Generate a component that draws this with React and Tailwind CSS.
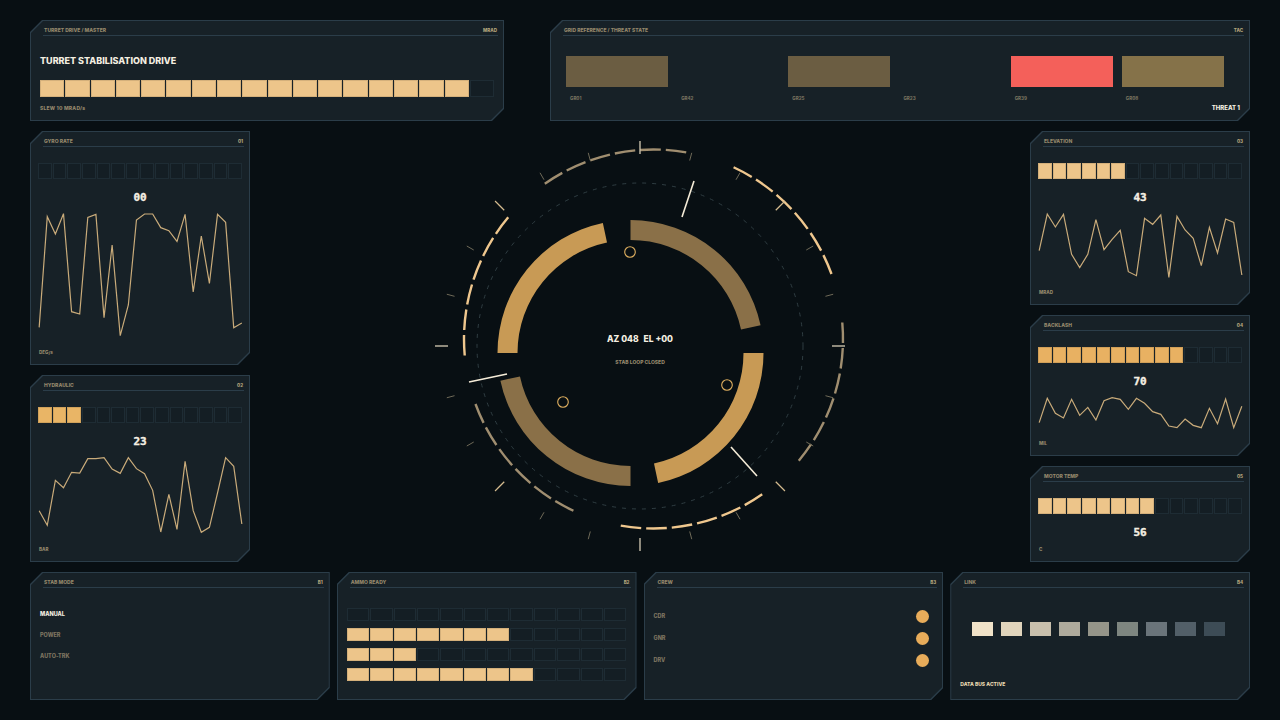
import React from "react";

const polar = (cx, cy, r, deg) => {
  const a = ((deg - 90) * Math.PI) / 180;
  return [cx + r * Math.cos(a), cy + r * Math.sin(a)];
};

const arc = (cx, cy, r, from, to) => {
  const [x1, y1] = polar(cx, cy, r, from);
  const [x2, y2] = polar(cx, cy, r, to);
  return `M${x1} ${y1}A${r} ${r} 0 ${to - from > 180 ? 1 : 0} 1 ${x2} ${y2}`;
};

const wedge = (cx, cy, r1, r2, from, to) => {
  const [x1, y1] = polar(cx, cy, r2, from);
  const [x2, y2] = polar(cx, cy, r2, to);
  const [x3, y3] = polar(cx, cy, r1, to);
  const [x4, y4] = polar(cx, cy, r1, from);
  return `M${x1} ${y1}A${r2} ${r2} 0 0 1 ${x2} ${y2}L${x3} ${y3}A${r1} ${r1} 0 0 0 ${x4} ${y4}Z`;
};

const Panel = ({ label, tag, className = "", children }) => (
  <div className={`bg-[#2b3d49] p-px [clip-path:polygon(12px_0,100%_0,100%_calc(100%-12px),calc(100%-12px)_100%,0_100%,0_12px)] ${className}`}>
    <div className="h-full bg-[#172127] flex flex-col [clip-path:polygon(12px_0,100%_0,100%_calc(100%-12px),calc(100%-12px)_100%,0_100%,0_12px)]">
      <div className="mt-[7px] ml-[12px] mr-[5px] h-[6px] px-px flex items-center justify-between border-b border-[#2b3d49] pb-[1px] box-content shrink-0">
        <span className="text-[5px] font-extrabold text-[#94876b]">{label}</span>
        <span className="text-[4.5px] font-extrabold text-[#b3a47c]">{tag}</span>
      </div>
      {children}
    </div>
  </div>
);

const Cells = ({ total, on, height, color = "bg-[#edc58a]" }) => (
  <div className="flex gap-[1px]">
    {Array.from({ length: total }).map((_, i) => (
      <div
        key={i}
        style={{ height }}
        className={`flex-1 border ${i < on ? `${color} border-black/10` : "bg-[#141e24] border-[#1e2c34]"}`}
      />
    ))}
  </div>
);

const Spark = ({ ys, top, height }) => {
  const pts = ys.map((y, i) => `${56 + i * 24.32},${y}`).join(" ");
  return (
    <svg width="203" height={height} viewBox={`56 ${top} 608 ${height * 3}`} className="block shrink-0 ml-[7.5px] mt-[8px] overflow-visible">
      <polyline points={pts} fill="none" stroke="#c9ab7a" strokeWidth="3.6" strokeLinejoin="miter" />
    </svg>
  );
};

const Gauge = ({ label, tag, on, color, value, unit, spark, top, chart, className }) => (
  <Panel label={label} tag={tag} className={className}>
    <div className="mt-[16px] px-[7px] shrink-0">
      <Cells total={14} on={on} height={16} color={color} />
    </div>
    <div className="mt-[12px] h-[14px] flex items-center justify-center font-['DejaVu_Sans_Mono',monospace] text-[11px] font-bold [-webkit-text-stroke:0.4px_#f5efe2] text-[#f5efe2] shrink-0">
      {value}
    </div>
    {spark && <Spark ys={spark} top={top} height={chart} />}
    <div className="mt-auto mb-[7px] ml-[8px] text-[4.5px] font-extrabold text-[#94876b]">{unit}</div>
  </Panel>
);

const gyro = [607, 275, 327, 266, 560, 567, 277, 268, 578, 360, 632, 540, 285, 267, 267, 308, 317, 349, 268, 501, 333, 475, 268, 292, 608, 594];
const hydraulic = [423, 467, 332, 354, 308, 310, 267, 267, 264, 298, 311, 264, 297, 312, 362, 487, 374, 479, 275, 423, 488, 473, 370, 264, 290, 463];
const elevation = [377, 267, 306, 268, 388, 428, 388, 284, 374, 343, 316, 440, 452, 280, 298, 270, 457, 274, 315, 340, 422, 307, 384, 282, 292, 450];
const backlash = [893, 820, 865, 879, 823, 871, 847, 885, 827, 818, 823, 853, 820, 835, 860, 868, 903, 908, 882, 901, 908, 850, 896, 822, 908, 844];

const grid = [
  { id: "GR01", color: "bg-[#6b5d42]" },
  { id: "GR42" },
  { id: "GR25", color: "bg-[#6b5d42]" },
  { id: "GR23" },
  { id: "GR39", color: "bg-[#f4605a]" },
  { id: "GR08", color: "bg-[#857249]" },
];

const linkColors = ["bg-[#f0e2c8]", "bg-[#e0d4bc]", "bg-[#c8bfac]", "bg-[#aeaa9c]", "bg-[#959589]", "bg-[#7e8680]", "bg-[#6a747a]", "bg-[#525f68]", "bg-[#3d4c56]"];

const tickStyle = (deg) => {
  if (deg % 90 === 0) return { r1: 192, r2: 205, color: "#e8dcc4", w: 1.2 };
  if (deg % 45 === 0) return { r1: 192, r2: 205, color: "#d5bc90", w: 1.2 };
  return { r1: 192, r2: 200, color: "#6f6a58", w: 1 };
};

const Dial = () => {
  const ticks = Array.from({ length: 24 }).map((_, i) => i * 15);
  const arcs = [25, 85, 145, 205, 265, 325];
  return (
    <svg viewBox="250 131 780 430" className="absolute left-0 top-0 w-[780px] h-[430px]">
      <circle cx="640" cy="346" r="163" fill="none" stroke="#2f3d42" strokeWidth="1" strokeDasharray="4 6" />
      {[0, 90, 180, 270].map((a, i) => (
        <path key={a} d={wedge(630.5, 353, 113, 133, a, a + 78)} fill={i % 2 ? "#c89a55" : "#8a7048"} />
      ))}
      {arcs.map((a, i) => (
        <path
          key={a}
          d={arc(653.5, 339, 189.5, a, a + 45)}
          fill="none"
          stroke={i % 2 ? "#a08e70" : "#efc78e"}
          strokeWidth="2.4"
          strokeDasharray="20.6 5"
        />
      ))}
      {ticks.map((deg) => {
        const t = tickStyle(deg);
        const [x1, y1] = polar(640, 346, t.r1, deg);
        const [x2, y2] = polar(640, 346, t.r2, deg);
        return <line key={deg} x1={x1} y1={y1} x2={x2} y2={y2} stroke={t.color} strokeWidth={t.w} />;
      })}
      <line x1="682" y1="217" x2="694" y2="181" stroke="#f5ecd8" strokeWidth="1.6" />
      <line x1="469" y1="382" x2="507" y2="374" stroke="#f5ecd8" strokeWidth="1.6" />
      <line x1="731" y1="447" x2="757" y2="476" stroke="#f5ecd8" strokeWidth="1.6" />
      <circle cx="630" cy="252" r="5.3" fill="none" stroke="#e0b060" strokeWidth="1.1" />
      <circle cx="563" cy="402" r="5.3" fill="none" stroke="#e0b060" strokeWidth="1.1" />
      <circle cx="727" cy="385" r="5.3" fill="none" stroke="#e0b060" strokeWidth="1.1" />
    </svg>
  );
};

export default function App() {
  return (
    <div className="w-[1280px] h-[720px] overflow-hidden bg-[#080f13] px-[30px] pt-[20px] flex flex-col font-['Inter',sans-serif]">
      {/* Top row */}
      <div className="flex justify-between h-[101px] shrink-0">
        <Panel label="TURRET DRIVE / MASTER" tag="MRAD" className="w-[474px]">
          <div className="mt-[19px] ml-[9px] h-[12px] flex items-center text-[9px] font-extrabold text-[#f3eee0]">
            TURRET STABILISATION DRIVE
          </div>
          <div className="mt-[13px] px-[9px]">
            <Cells total={18} on={17} height={17} />
          </div>
          <div className="mt-[8px] ml-[9px] text-[5px] font-extrabold tracking-[0.2px] text-[#94876b]">SLEW 10 MRAD/s</div>
        </Panel>
        <Panel label="GRID REFERENCE / THREAT STATE" tag="TAC" className="w-[700px]">
          <div className="mt-[20px] ml-[15px] w-[658px] grid grid-cols-6 gap-x-[9px]">
            {grid.map((g) => (
              <div key={g.id}>
                <div className={`h-[31px] ${g.color || ""}`} />
                <div className="mt-[9px] ml-[4px] text-[4.5px] font-extrabold text-[#75705e]">{g.id}</div>
              </div>
            ))}
          </div>
          <div className="mt-auto mb-[9px] mr-[9px] text-right text-[6px] font-extrabold text-[#f3eee0]">THREAT 1</div>
        </Panel>
      </div>

      {/* Middle row */}
      <div className="mt-[10px] flex justify-between h-[431px] shrink-0">
        <div className="w-[220px] flex flex-col gap-[10px]">
          <Gauge label="GYRO RATE" tag="01" on={0} value="00" unit="DEG/s" spark={gyro} top={264} chart={124} className="h-[234px]" />
          <Gauge label="HYDRAULIC" tag="02" on={3} color="bg-[#e9b566]" value="23" unit="BAR" spark={hydraulic} top={262} chart={78} className="h-[187px]" />
        </div>

        <div className="relative flex-1">
          <Dial />
          <div className="absolute inset-x-0 top-[202px] flex flex-col items-center">
            <div className="h-[12px] flex items-center gap-[5px] text-[8.5px] font-extrabold text-[#f5efe2] whitespace-pre">
              <span>AZ 048</span>
              <span>EL +00</span>
            </div>
            <div className="mt-[14px] text-[5px] font-extrabold text-[#94876b]">STAB LOOP CLOSED</div>
          </div>
        </div>

        <div className="w-[220px] flex flex-col gap-[10px]">
          <Gauge label="ELEVATION" tag="03" on={6} value="43" unit="MRAD" spark={elevation} top={264} chart={65} className="h-[174px]" />
          <Gauge label="BACKLASH" tag="04" on={10} color="bg-[#e8b162]" value="70" unit="MIL" spark={backlash} top={816} chart={31} className="h-[141px]" />
          <Gauge label="MOTOR TEMP" tag="05" on={8} value="56" unit="C" className="h-[96px]" />
        </div>
      </div>

      {/* Bottom row */}
      <div className="mt-[10px] grid grid-cols-4 gap-x-[7px] h-[128px] shrink-0">
        <Panel label="STAB MODE" tag="B1">
          <div className="mt-[22px] ml-[9px] flex flex-col gap-[14px] text-[5.5px] font-extrabold">
            <span className="h-[7px] text-[#f3eee0]">MANUAL</span>
            <span className="h-[7px] text-[#7d7460]">POWER</span>
            <span className="h-[7px] text-[#7d7460]">AUTO-TRK</span>
          </div>
        </Panel>
        <Panel label="AMMO READY" tag="B2">
          <div className="mt-[20px] px-[9px] flex flex-col gap-[7px]">
            {[0, 7, 3, 8].map((n, i) => (
              <Cells key={i} total={12} on={n} height={13} />
            ))}
          </div>
        </Panel>
        <Panel label="CREW" tag="B3">
          <div className="mt-[22px] ml-[9px] mr-[13px] flex flex-col gap-[9px]">
            {["CDR", "GNR", "DRV"].map((c) => (
              <div key={c} className="flex items-center justify-between h-[13px]">
                <span className="text-[5.5px] font-extrabold text-[#7d7460]">{c}</span>
                <span className="w-[13px] h-[13px] rounded-full bg-[#e8ac5a]" />
              </div>
            ))}
          </div>
        </Panel>
        <Panel label="LINK" tag="B4">
          <div className="mt-[34px] ml-[21px] flex gap-[8px]">
            {linkColors.map((c) => (
              <div key={c} className={`w-[21px] h-[14px] ${c}`} />
            ))}
          </div>
          <div className="mt-auto mb-[11px] ml-[9px] text-[5px] font-extrabold text-[#e8d8b0]">DATA BUS ACTIVE</div>
        </Panel>
      </div>
    </div>
  );
}
